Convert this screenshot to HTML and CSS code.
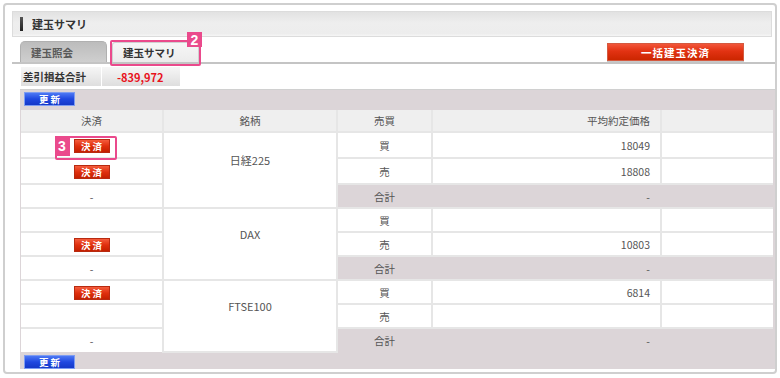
FILE: index.html
```html
<!DOCTYPE html>
<html lang="ja">
<head>
<meta charset="utf-8">
<link rel="stylesheet" href="styles.css">
</head>
<body>
<div class="frame">
  <div class="titlebar"><span class="marker"></span><h1>建玉サマリ</h1></div>
  <div class="tabrow">
    <span class="tab tab-off">建玉照会</span>
    <span class="tab tab-on">建玉サマリ<span class="hl"></span><span class="badge badge-2">2</span></span>
    <span class="spacer"></span>
    <button class="btn-bulk">一括建玉決済</button>
  </div>
  <div class="summary">
    <span class="sum-label">差引損益合計</span>
    <span class="sum-value">-839,972</span>
  </div>
  <div class="panel">
    <button class="btn-blue">更 新</button>
    <table class="grid">
      <colgroup>
        <col class="c1"><col class="c2"><col class="c3"><col class="c4"><col class="c5">
      </colgroup>
      <thead>
        <tr><th>決済</th><th>銘柄</th><th>売買</th><th class="num">平均約定価格</th><th></th></tr>
      </thead>
      <tbody>
        <tr class="tall">
          <td><span class="hl3"><span class="badge3">3</span></span><button class="btn-kessai">決 済</button></td>
          <td rowspan="3" class="name">日経225</td>
          <td>買</td><td class="num">18049</td><td></td>
        </tr>
        <tr class="tall"><td><button class="btn-kessai">決 済</button></td><td>売</td><td class="num">18808</td><td></td></tr>
        <tr><td>-</td><td class="total">合計</td><td class="total num">-</td><td class="total"></td></tr>
        <tr>
          <td></td>
          <td rowspan="3" class="name">DAX</td>
          <td>買</td><td class="num"></td><td></td>
        </tr>
        <tr><td><button class="btn-kessai">決 済</button></td><td>売</td><td class="num">10803</td><td></td></tr>
        <tr><td>-</td><td class="total">合計</td><td class="total num">-</td><td class="total"></td></tr>
        <tr>
          <td><button class="btn-kessai">決 済</button></td>
          <td rowspan="3" class="name">FTSE100</td>
          <td>買</td><td class="num">6814</td><td></td>
        </tr>
        <tr><td></td><td>売</td><td class="num"></td><td></td></tr>
        <tr><td>-</td><td class="total">合計</td><td class="total num">-</td><td class="total"></td></tr>
      </tbody>
    </table>
    <button class="btn-blue">更 新</button>
  </div>
</div>
</body>
</html>
```
FILE: styles.css
```css
* { box-sizing: border-box; }
html, body { margin: 0; padding: 0; background: #fff; }
body {
  font-family: "Noto Sans CJK JP", "Noto Sans", sans-serif;
  font-size: 10px;
  color: #555;
}
.frame {
  margin: 3px;
  width: 774px;
  height: 371px;
  border: 2px solid #cfcfcf;
  border-radius: 4px;
  padding: 6px 0 0 7px;
  display: flex;
  flex-direction: column;
}
.titlebar {
  height: 26px;
  margin-right: 3px;
  border: 1px solid #dcdcdc;
  background: linear-gradient(#e2e2e2, #eeeeee 45%, #ededed 90%, #f6f6f6);
  display: flex;
  align-items: center;
  padding-left: 7px;
}
.marker {
  width: 3px;
  height: 14px;
  background: linear-gradient(#555, #222);
  margin-right: 9px;
}
.titlebar h1 {
  margin: 0;
  font-size: 11px;
  font-weight: bold;
  color: #333;
}
.tabrow {
  margin-top: 3px;
  height: 24px;
  border-bottom: 2px solid #c4c4c4;
  display: flex;
  align-items: flex-end;
  padding-left: 8px;
}
.tab {
  height: 21px;
  border-radius: 5px 5px 0 0;
  font-weight: bold;
  font-size: 10.5px;
  display: flex;
  align-items: center;
  padding-left: 10px;
}
.tab-off {
  width: 87px;
  background: linear-gradient(#bcbcbc, #cfcfcf);
  border: 1px solid #b0b0b0;
  border-bottom: none;
  color: #5a5a5a;
}
.tab-on {
  position: relative;
  width: 87px;
  margin-left: 5px;
  height: 20px;
  background: linear-gradient(#f6f6f6, #ececec);
  border: 1px solid #d0d0d0;
  border-bottom: none;
  border-radius: 3px 3px 0 0;
  color: #333;
}
.hl {
  position: absolute;
  left: -3px; top: -3px; right: -3px; bottom: -4px;
  border: 2px solid #ea4a8c;
  border-radius: 2px;
}
.badge {
  position: absolute;
  background: #ea4a8c;
  color: #fff;
  font-family: "Liberation Sans", Arial, sans-serif;
  font-weight: bold;
  display: flex;
  align-items: center;
  justify-content: center;
}
.badge-2 {
  right: -4px;
  top: -11px;
  width: 15px;
  height: 15px;
  font-size: 14px;
}
.spacer { flex: 1; }
.btn-bulk {
  margin: 0 31px 1px 0;
  width: 137px;
  height: 18px;
  border: 1px solid #d45a40;
  background: linear-gradient(#f2563a, #e23212 45%, #cc2600);
  color: #fff;
  font-family: inherit;
  font-size: 10.5px;
  font-weight: bold;
  letter-spacing: 1px;
  padding: 0;
  box-shadow: 0 1px 0 #c8c8c8;
}
.summary {
  margin: 3px 0 0 9px;
  display: flex;
  gap: 1px;
  height: 19px;
}
.sum-label, .sum-value {
  background: linear-gradient(#f6f6f6, #dedede);
  display: flex;
  align-items: center;
  font-weight: bold;
  font-size: 10.5px;
}
.sum-label { width: 80px; padding-left: 2px; color: #333; }
.sum-value { width: 78px; padding-left: 15px; color: #e8121c; font-size: 11px; }
.panel {
  flex: 1;
  margin: 3px 0 3px 8px;
  border-top: 1px solid #d0d0d0;
  background: #dcd5d8;
  padding: 2px 0 0 1px;
  display: flex;
  flex-direction: column;
  align-items: flex-start;
}
.btn-blue {
  margin-left: 3px;
  width: 51px;
  height: 14px;
  padding: 0;
  border: 1px solid #7d9cf2;
  background: linear-gradient(#4d78f4, #1f48e0 50%, #1538c8);
  color: #fff;
  font-family: inherit;
  font-size: 9.5px;
  font-weight: bold;
  line-height: 12px;
}
.grid {
  margin: 4px 0 2px 0;
  width: 752px;
  border-collapse: collapse;
  table-layout: fixed;
}
.c1 { width: 142px; }
.c2 { width: 174px; }
.c3 { width: 95px; }
.c4 { width: 229px; }
.c5 { width: 112px; }
.grid th, .grid td {
  border: 2px solid #e6e6e6;
  text-align: center;
  font-weight: normal;
  color: #555;
  padding: 0;
  height: 24px;
  font-size: 10.5px;
}
.grid tr.tall td { height: 26px; }
.grid th { background: #efefef; height: 22px; border-top: none; }
.grid td { background: #fff; }
.grid .num { text-align: right; padding-right: 10px; }
.grid td.total { background: #dcd5d8; border-color: #dcd5d8; border-bottom-color: #e6e6e6; }
.grid td.name { vertical-align: middle; padding-bottom: 20px; font-size: 11px; }
.grid tr > :first-child { border-left: none; }
.grid tr > :last-child { border-right: none; }
.grid tbody tr:last-child td { border-bottom: none; }
.btn-kessai {
  position: relative;
  width: 36px;
  height: 14px;
  padding: 0;
  border: 1px solid #b82a10;
  background: linear-gradient(#f45c3c, #e0300e 50%, #c42000);
  color: #fff;
  font-family: inherit;
  font-size: 9.5px;
  font-weight: bold;
  line-height: 12px;
  vertical-align: middle;
}
.hl3 {
  position: relative;
  display: inline-block;
  width: 0;
  height: 0;
  vertical-align: middle;
}
.hl3::after {
  content: "";
  position: absolute;
  left: -19px;
  top: -10px;
  width: 58px;
  height: 20px;
  border: 2px solid #ea4a8c;
  border-radius: 2px;
}
.badge3 {
  position: absolute;
  left: -19px;
  top: -10px;
  width: 15px;
  height: 20px;
  background: #ea4a8c;
  color: #fff;
  font-family: "Liberation Sans", Arial, sans-serif;
  font-weight: bold;
  font-size: 14px;
  display: flex;
  align-items: center;
  justify-content: center;
}
```
